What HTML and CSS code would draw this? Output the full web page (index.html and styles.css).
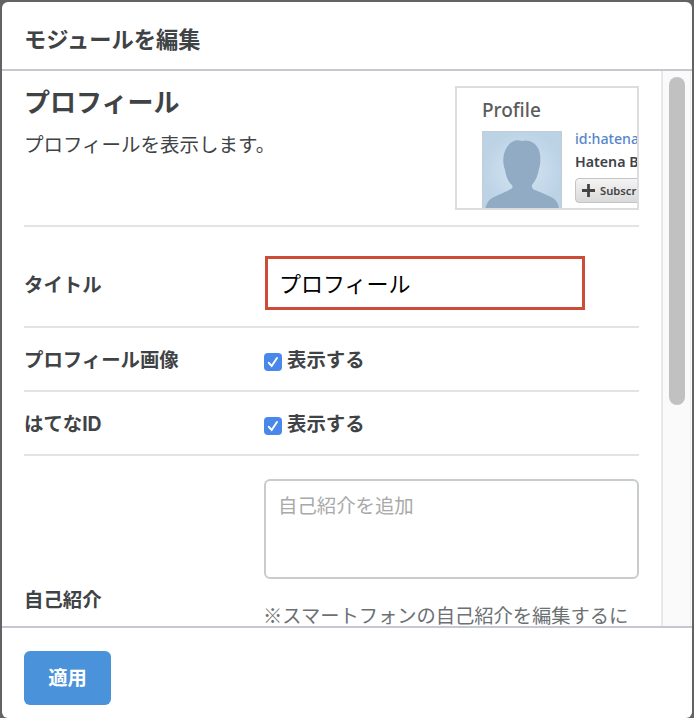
FILE: index.html
```html
<!DOCTYPE html>
<html lang="ja">
<head>
<meta charset="utf-8">
<title>モジュールを編集</title>
<link rel="stylesheet" href="styles.css">
</head>
<body>
<div class="modal">
  <header class="modal-header"><h1>モジュールを編集</h1></header>
  <div class="modal-body">
    <main class="content">
      <section class="intro">
        <div class="intro-text">
          <h2>プロフィール</h2>
          <p>プロフィールを表示します。</p>
        </div>
        <div class="preview">
          <div class="preview-title">Profile</div>
          <div class="preview-row">
            <svg class="avatar" width="80" height="80" viewBox="0 0 80 80">
              <defs><radialGradient id="sky"><stop offset="0" stop-color="#d5e5f2"/><stop offset="1" stop-color="#bcd3e6"/></radialGradient></defs>
              <rect x=".5" y=".5" width="79" height="79" fill="url(#sky)" stroke="#c3ccd3"/>
              <path fill="#92abc4" d="M39.500 10C46 8 53 11 56 17C59 23 59 31 57 38C56 44 54 49 50 54C49 58 53 59 58 61L69 66C75 69 77 73 77 80H3C4 73 6 69 12 66L23 61C29 58 32 57 30 54C26 51 24 45 23 39C20 31 21 22 25 16C28 11 34 8 39.500 10Z"/>
            </svg>
            <div class="preview-info">
              <div class="hatena-id">id:hatena</div>
              <div class="blog-name">Hatena B</div>
              <div class="subscribe"><svg width="13" height="13" viewBox="0 0 13 13"><path d="M6.500 0V13M0 6.500H13" stroke="#444" stroke-width="2.800"/></svg>Subscr</div>
            </div>
          </div>
        </div>
      </section>
      <div class="field field-title">
        <label for="title">タイトル</label>
        <input id="title" class="text-input" type="text" value="プロフィール">
      </div>
      <div class="field field-check">
        <span class="label">プロフィール画像</span>
        <div class="check"><span class="box"><svg width="18" height="18" viewBox="0 0 18 18"><path d="M4.800 9.800L7.700 13L13 5" fill="none" stroke="#fff" stroke-width="2" stroke-linecap="round"/></svg></span>表示する</div>
      </div>
      <div class="field field-check">
        <span class="label">はてなID</span>
        <div class="check"><span class="box"><svg width="18" height="18" viewBox="0 0 18 18"><path d="M4.800 9.800L7.700 13L13 5" fill="none" stroke="#fff" stroke-width="2" stroke-linecap="round"/></svg></span>表示する</div>
      </div>
      <div class="field field-bio">
        <label for="bio">自己紹介</label>
        <div>
          <textarea id="bio" placeholder="自己紹介を追加"></textarea>
          <p class="note">※スマートフォンの自己紹介を編集するに</p>
        </div>
      </div>
    </main>
    <div class="scrollbar"><div class="thumb"></div></div>
  </div>
  <footer class="modal-footer"><button type="button">適用</button></footer>
</div>
</body>
</html>
```
FILE: styles.css
```css
* { box-sizing: border-box; }
body {
  margin: 0;
  height: 718px;
  padding: 2px 2px 0;
  overflow: hidden;
  background: #636363;
  color: #404346;
  font-family: Inter, "Noto Sans CJK JP", sans-serif;
  font-size: 19.400px;
}
h1, h2, p { margin: 0; }
.modal {
  height: 716px;
  display: flex;
  flex-direction: column;
  background: #fff;
  border-radius: 6px;
  overflow: hidden;
}
.modal-header {
  height: 69px;
  flex: none;
  padding: 22px 22px 0;
  border-bottom: 2px solid #c5c8ce;
}
h1 { font-size: 22.250px; line-height: 32px; }
.modal-body {
  display: flex;
  height: 557px;
  flex: none;
  overflow: hidden;
  border-bottom: 2px solid #c5c8ce;
}
.content { width: 659px; flex: none; padding: 15px 22px 0 22px; }
.intro {
  display: flex;
  justify-content: space-between;
  height: 141px;
  border-bottom: 2px solid #e1e3e4;
}
h2 { font-size: 26px; line-height: 38px; margin-top: -2px; }
.intro-text p { font-size: 19.500px; line-height: 30px; margin-top: 8px; }
.preview {
  width: 184px;
  height: 124px;
  border: 2px solid #dcddde;
  padding: 12px 0 0 25px;
  overflow: hidden;
  white-space: nowrap;
}
.preview-title {
  font: 500 19px/20px "Noto Sans", sans-serif;
  color: #5c5c5c;
  height: 31px;
}
.preview-row { display: flex; gap: 13px; }
.avatar { flex: none; display: block; }
.hatena-id { font: 500 14.200px/16px "Noto Sans", sans-serif; color: #5686ca; }
.blog-name { font: 600 14.200px/20px "Noto Sans", sans-serif; color: #3e424a; margin-top: 5px; }
.subscribe {
  display: flex;
  align-items: center;
  gap: 5px;
  width: 100px;
  height: 25px;
  margin-top: 6px;
  padding-left: 6px;
  border: 1px solid #c4c4c4;
  border-radius: 4px;
  background: linear-gradient(#f4f4f4, #d9d9d9);
  font: 600 11.200px/20px "Noto Sans", sans-serif;
  color: #444;
}
.field {
  display: grid;
  grid-template-columns: 240px 1fr;
  align-items: center;
  border-bottom: 2px solid #e3e3e3;
}
.field label, .label, .check { font-weight: 700; }
.field-title { height: 101px; }
.field-title label { padding-top: 14px; }
.text-input {
  width: 320px;
  height: 54px;
  margin: 12px 0 0 1px;
  padding: 0 12px 2px 11px;
  border: 3px solid #cd4c37;
  border-radius: 0;
  background: #fff;
  color: #000;
  font: 22px "Noto Sans CJK JP", sans-serif;
  outline: none;
}
.field-check { height: 64px; padding-bottom: 2px; }
.check { display: flex; align-items: center; gap: 5px; }
.box {
  width: 18px;
  height: 18px;
  border-radius: 4px;
  background: #4a87ea;
  margin-top: 7px;
}
.box svg { display: block; }
.field-bio { padding-top: 23px; height: 290px; align-items: start; border: 0; }
.field-bio label { line-height: 30px; margin-top: 106px; }
textarea {
  display: block;
  width: 375px;
  height: 100px;
  padding: 10px 12px;
  border: 2px solid #c8cccf;
  border-radius: 6px;
  resize: none;
  font: 19.400px/28px "Noto Sans CJK JP", sans-serif;
}
textarea::placeholder { color: #a9a9a9; }
.note {
  margin: 23px 0 0 -1px;
  font-family: "Noto Sans CJK JP", sans-serif;
  font-size: 19.250px;
  line-height: 27px;
  color: #6b7073;
  white-space: nowrap;
}
.scrollbar {
  flex: 1;
  padding: 6px 0 0 6px;
  border-left: 2px solid #e8e8e8;
  background: linear-gradient(90deg, #fafafa 27px, #ededed 27px, #ededed 28px, #fff 28px);
}
.thumb { width: 16px; height: 328px; border-radius: 8px; background: #c1c1c1; }
.modal-footer { padding: 23px 22px 0; }
button {
  display: block;
  width: 87px;
  height: 54px;
  padding: 0 0 2px;
  border: 0;
  border-radius: 6px;
  background: #4a92d9;
  color: #fff;
  font: 700 19.300px "Noto Sans CJK JP", sans-serif;
}
```
